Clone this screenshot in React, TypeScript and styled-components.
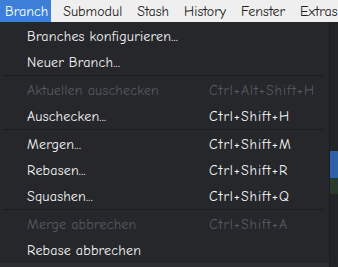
import React from "react";
import styled, { createGlobalStyle } from "styled-components";

const Global = createGlobalStyle`
  html, body { margin: 0; padding: 0; background: #232428; }
  body { width: 338px; height: 267px; overflow: hidden; }
`;

const FONT = `"Comic Neue", "DejaVu Sans", "Noto Sans", sans-serif`;

const Window = styled.div`
  position: relative;
  width: 338px;
  height: 267px;
  display: flex;
  flex-direction: column;
  font-family: ${FONT};
  font-size: 14px;
  overflow: hidden;
`;

const MenuBar = styled.div`
  height: 22px;
  flex: none;
  display: flex;
  align-items: stretch;
  background: #efefef;
  overflow: hidden;
`;

const MenuTitle = styled.div<{ $active?: boolean }>`
  display: flex;
  align-items: center;
  padding: 0 3px 0 5px;
  margin-right: 7px;
  color: ${(p) => (p.$active ? "#ffffff" : "#202020")};
  background: ${(p) => (p.$active ? "#3d7fd6" : "transparent")};
  white-space: nowrap;
  flex: none;
`;

const Content = styled.div`
  flex: 1;
  display: flex;
  justify-content: flex-end;
  background: #2c2e32;
`;

const SideStrip = styled.div`
  width: 8px;
  display: flex;
  flex-direction: column;
  background: #232428;
  border-left: 1px solid #1a1b1e;
`;

const Thumb = styled.div<{ $h: number; $c: string }>`
  height: ${(p) => p.$h}px;
  background: ${(p) => p.$c};
  flex: none;
`;

const Dropdown = styled.div`
  position: absolute;
  top: 22px;
  left: 0;
  width: 330px;
  padding: 1px 0 0;
  background: #25272b;
  border-right: 1px solid #1c1d20;
  display: flex;
  flex-direction: column;
  box-sizing: border-box;
`;

const Item = styled.div<{ $disabled?: boolean }>`
  height: 26px;
  display: grid;
  grid-template-columns: 182px 1fr;
  align-items: center;
  padding-left: 27px;
  color: ${(p) => (p.$disabled ? "#575a60" : "#f6f6f6")};
  white-space: nowrap;
`;

const Label = styled.span`
  letter-spacing: 0.2px;
`;

const Shortcut = styled.span`
  letter-spacing: 0.9px;
`;

const Separator = styled.div`
  height: 1px;
  margin: 0 5px 1px 3px;
  background: #1b1c1f;
`;

type Entry = { label: string; key?: string; disabled?: boolean } | "sep";

const entries: Entry[] = [
  { label: "Branches konfigurieren..." },
  { label: "Neuer Branch..." },
  "sep",
  { label: "Aktuellen auschecken", key: "Ctrl+Alt+Shift+H", disabled: true },
  { label: "Auschecken...", key: "Ctrl+Shift+H" },
  "sep",
  { label: "Mergen...", key: "Ctrl+Shift+M" },
  { label: "Rebasen...", key: "Ctrl+Shift+R" },
  { label: "Squashen...", key: "Ctrl+Shift+Q" },
  "sep",
  { label: "Merge abbrechen", key: "Ctrl+Shift+A", disabled: true },
  { label: "Rebase abbrechen" },
];

export default function App() {
  return (
    <Window>
      <Global />
      <MenuBar>
        <MenuTitle $active>Branch</MenuTitle>
        <MenuTitle>Submodul</MenuTitle>
        <MenuTitle>Stash</MenuTitle>
        <MenuTitle>History</MenuTitle>
        <MenuTitle>Fenster</MenuTitle>
        <MenuTitle>Extras</MenuTitle>
      </MenuBar>
      <Content>
        <SideStrip>
          <Thumb $h={129} $c="#232428" />
          <Thumb $h={27} $c="#2d62a8" />
          <Thumb $h={16} $c="#2a3a2a" />
        </SideStrip>
      </Content>
      <Dropdown>
        {entries.map((e, i) =>
          e === "sep" ? (
            <Separator key={i} />
          ) : (
            <Item key={i} $disabled={e.disabled}>
              <Label>{e.label}</Label>
              <Shortcut>{e.key ?? ""}</Shortcut>
            </Item>
          )
        )}
      </Dropdown>
    </Window>
  );
}
